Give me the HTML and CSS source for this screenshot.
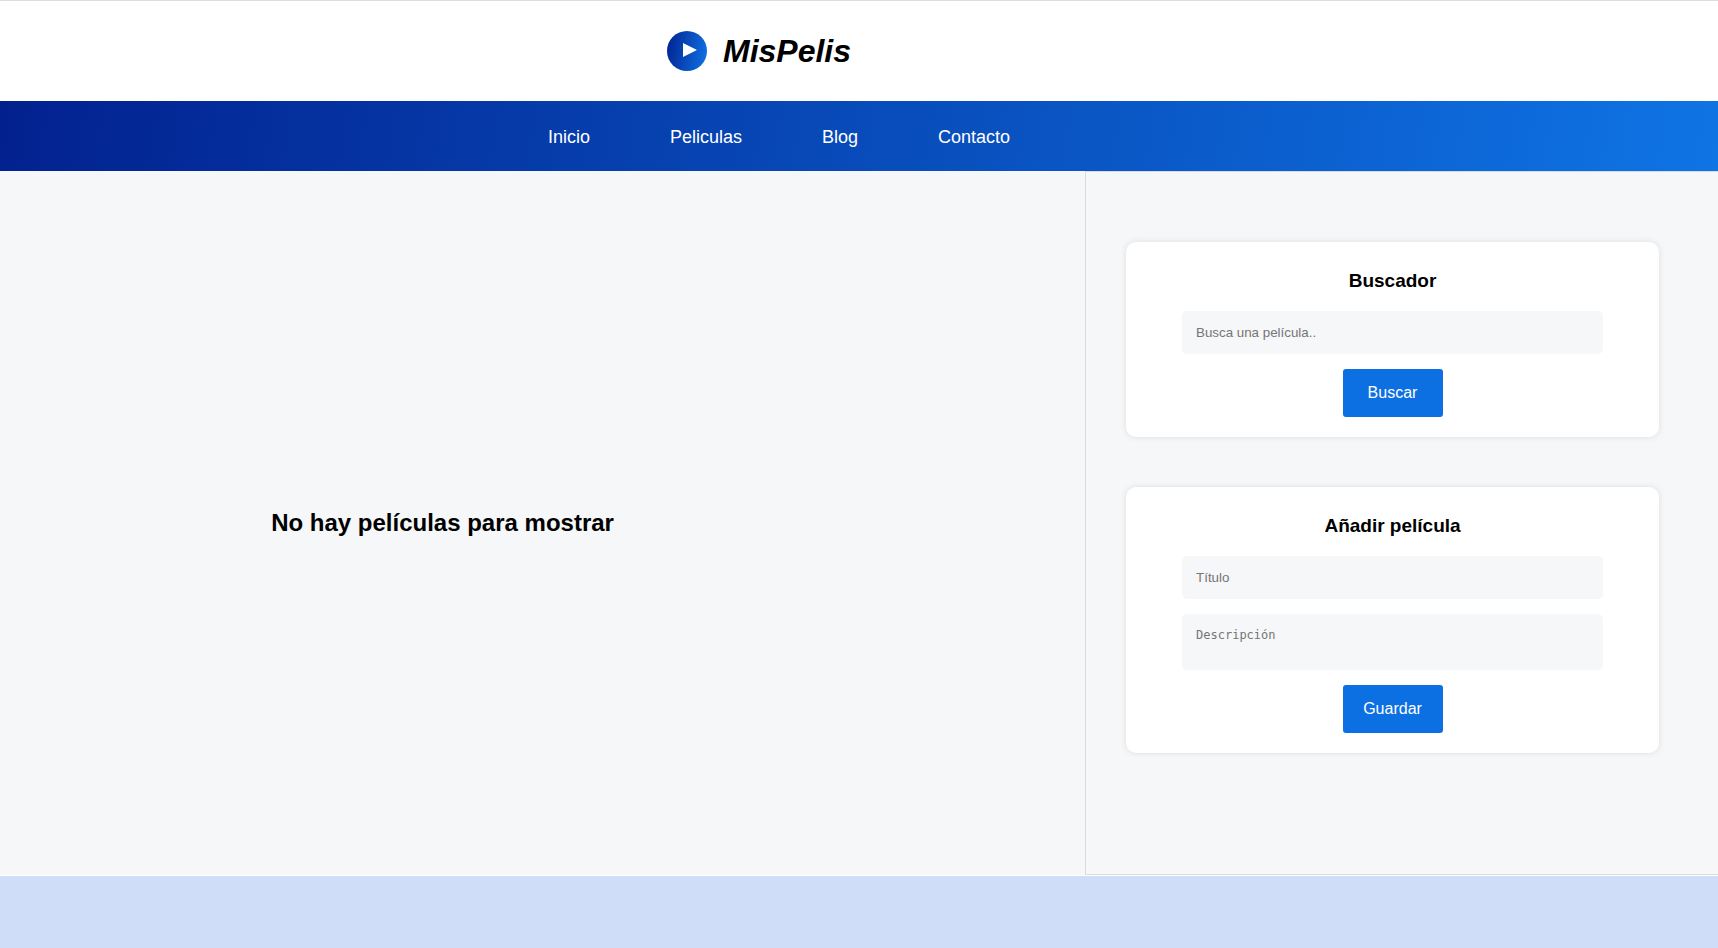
FILE: index.html
```html
<!DOCTYPE html>
<html lang="es">
<head>
<meta charset="utf-8">
<meta name="viewport" content="width=device-width, initial-scale=1">
<title>MisPelis</title>
<link rel="stylesheet" href="styles.css">
</head>
<body>
<div class="layout">
  <header class="header">
    <div class="logo" aria-hidden="true">
      <svg class="logo-icon" viewBox="0 0 40 40"><path d="M16 12L30 19L16 26Z" fill="#fff"/></svg>
    </div>
    <h1 class="brand">MisPelis</h1>
  </header>

  <nav class="nav">
    <ul class="nav-list">
      <li><a href="#inicio">Inicio</a></li>
      <li><a href="#peliculas">Peliculas</a></li>
      <li><a href="#blog">Blog</a></li>
      <li><a href="#contacto">Contacto</a></li>
    </ul>
  </nav>

  <div class="body">
    <main class="content">
      <h2 class="empty">No hay películas para mostrar</h2>
    </main>

    <aside class="sidebar">
      <section class="card">
        <h3 class="card-title">Buscador</h3>
        <form class="form">
          <input class="field" type="text" placeholder="Busca una película.." aria-label="Busca una película">
          <button class="button" type="button">Buscar</button>
        </form>
      </section>
      <section class="card">
        <h3 class="card-title">Añadir película</h3>
        <form class="form">
          <input class="field" type="text" placeholder="Título" aria-label="Título">
          <textarea class="field field-area" placeholder="Descripción" aria-label="Descripción"></textarea>
          <button class="button" type="submit">Guardar</button>
        </form>
      </section>
    </aside>
  </div>

  <footer class="footer"></footer>
</div>
</body>
</html>
```
FILE: styles.css
```css
* {
  box-sizing: border-box;
  margin: 0;
  padding: 0;
}

body {
  font-family: "Liberation Sans", Arial, sans-serif;
  color: #000;
  background: #fff;
}

.layout {
  display: flex;
  flex-direction: column;
  min-height: 100vh;
}

.header {
  display: flex;
  align-items: center;
  justify-content: center;
  gap: 16px;
  padding: 30px 200px 30px 0;
  border-top: 1px solid #ddd;
}

.logo {
  width: 40px;
  height: 40px;
  border-radius: 50%;
  background: linear-gradient(100deg, #02218f, #0f74e7);
}

.logo-icon {
  display: block;
  width: 100%;
}

.brand {
  font-size: 32px;
  line-height: 40px;
  font-style: italic;
}

.nav {
  padding: 0 160px 0 0;
  background: linear-gradient(100deg, #02218f, #0f74e4);
}

.nav-list {
  display: flex;
  justify-content: center;
  gap: 80px;
  list-style: none;
}

.nav-list a {
  display: block;
  padding: 24px 0 22px;
  font-size: 18px;
  line-height: 24px;
  color: #fff;
  text-decoration: none;
}

.body {
  flex: 1;
  display: grid;
  grid-template-columns: 12fr 7fr;
  background: #f5f7f9;
  border-bottom: 1px solid #fff;
}

.content {
  display: flex;
  align-items: center;
  justify-content: center;
  padding-right: 200px;
}

.empty {
  font-size: 24px;
  line-height: 28px;
}

.sidebar {
  display: flex;
  flex-direction: column;
  gap: 50px;
  padding: 70px 59px 70px 40px;
  border: 1px solid #d9dbde;
  border-right: 0;
}

.card {
  padding: 27px 56px 20px;
  border-radius: 10px;
  background: #fff;
  box-shadow: 0 0 6px #ddd;
}

.card-title {
  margin-bottom: 18px;
  font-size: 19px;
  line-height: 24px;
  text-align: center;
}

.form {
  display: flex;
  flex-direction: column;
  align-items: center;
  gap: 15px;
}

.field {
  width: 100%;
  height: 43px;
  padding: 0 14px;
  border: 0;
  border-radius: 5px;
  background: #f5f7f9;
  font-family: "Liberation Sans", Arial, sans-serif;
}

.field::placeholder {
  color: #757575;
}

.field-area {
  height: 56px;
  padding: 14px;
  font-family: "DejaVu Sans Mono", monospace;
  font-size: 12px;
  resize: none;
}

.button {
  width: 100px;
  height: 48px;
  border: 0;
  border-radius: 3px;
  background: #0c70e3;
  color: #fff;
  font-family: inherit;
  font-size: 16px;
  cursor: pointer;
}

.footer {
  height: 72px;
  background: #d0ddf8;
}
```
